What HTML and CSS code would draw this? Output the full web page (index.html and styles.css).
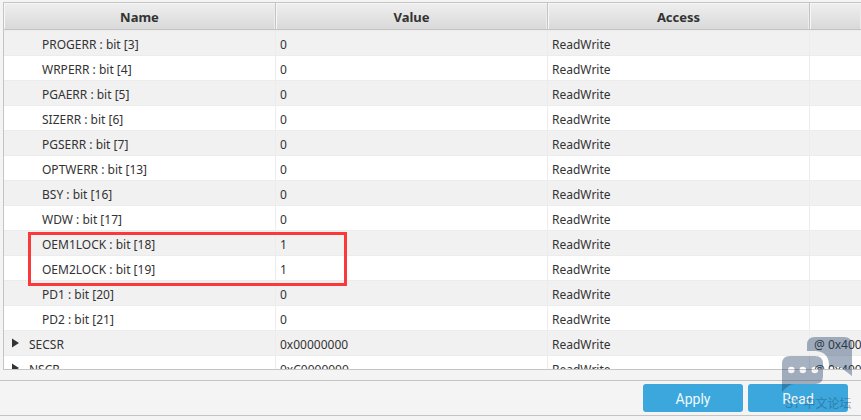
FILE: index.html
```html
<!DOCTYPE html>
<html lang="en">
<head>
    <meta charset="UTF-8">
    <meta name="viewport" content="width=device-width, initial-scale=1.0">
    <title>Option Bytes Registers</title>
    <link rel="stylesheet" href="styles.css">
</head>
<body>
    <main class="panel">
        <table class="registers">
            <colgroup>
                <col class="col-name">
                <col class="col-value">
                <col class="col-access">
                <col>
            </colgroup>
            <thead>
                <tr><th>Name</th><th>Value</th><th>Access</th><th></th></tr>
            </thead>
            <tbody>
                <tr><td class="bit">PROGERR : bit [3]</td><td>0</td><td>ReadWrite</td><td></td></tr>
                <tr><td class="bit">WRPERR : bit [4]</td><td>0</td><td>ReadWrite</td><td></td></tr>
                <tr><td class="bit">PGAERR : bit [5]</td><td>0</td><td>ReadWrite</td><td></td></tr>
                <tr><td class="bit">SIZERR : bit [6]</td><td>0</td><td>ReadWrite</td><td></td></tr>
                <tr><td class="bit">PGSERR : bit [7]</td><td>0</td><td>ReadWrite</td><td></td></tr>
                <tr><td class="bit">OPTWERR : bit [13]</td><td>0</td><td>ReadWrite</td><td></td></tr>
                <tr><td class="bit">BSY : bit [16]</td><td>0</td><td>ReadWrite</td><td></td></tr>
                <tr><td class="bit">WDW : bit [17]</td><td>0</td><td>ReadWrite</td><td></td></tr>
                <tr><td class="bit">OEM1LOCK : bit [18]</td><td>1</td><td>ReadWrite</td><td></td></tr>
                <tr><td class="bit">OEM2LOCK : bit [19]</td><td>1</td><td>ReadWrite</td><td></td></tr>
                <tr><td class="bit">PD1 : bit [20]</td><td>0</td><td>ReadWrite</td><td></td></tr>
                <tr><td class="bit">PD2 : bit [21]</td><td>0</td><td>ReadWrite</td><td></td></tr>
                <tr>
                    <td class="register"><svg class="arrow" width="7" height="10" viewBox="0 0 7 10"><path d="M0 0.5L7 5L0 9.5Z"/></svg>SECSR</td>
                    <td>0x00000000</td><td>ReadWrite</td><td>@ 0x40022024</td>
                </tr>
                <tr>
                    <td class="register"><svg class="arrow" width="7" height="10" viewBox="0 0 7 10"><path d="M0 0.5L7 5L0 9.5Z"/></svg>NSCR</td>
                    <td>0xC0000000</td><td>ReadWrite</td><td>@ 0x40022028</td>
                </tr>
            </tbody>
        </table>
        <div class="highlight"></div>
    </main>

    <footer class="actions">
        <button type="button">Apply</button>
        <button type="button">Read</button>
    </footer>

    <div class="watermark">
        <svg width="72" height="56" viewBox="0 0 72 56">
            <path d="M26 15V9Q26 1 34 1H63Q71 1 71 9V40L59 31H48V28Q47 16 35 15Z"/>
            <path fill-rule="evenodd" d="M9 20H34Q42 20 42 28V40Q42 48 34 48H13Q8 48 1 56V28Q1 20 9 20ZM7 34a3.3 3.3 0 1 0 6.6 0a3.3 3.3 0 1 0 -6.6 0ZM18.500 34a3.3 3.3 0 1 0 6.6 0a3.3 3.3 0 1 0 -6.6 0ZM30.500 34a3.3 3.3 0 1 0 6.6 0a3.3 3.3 0 1 0 -6.6 0Z"/>
        </svg>
        <span lang="zh">ST 中文论坛</span>
    </div>
</body>
</html>
```

FILE: styles.css
```css
* {
    box-sizing: border-box;
}

body {
    font-family: "Noto Sans", "Noto Sans CJK SC", sans-serif;
    font-size: 12px;
    color: #333;
    background-color: #f4f4f4;
    margin: 0;
    height: 100vh;
    overflow: hidden;
    position: relative;
    display: flex;
    flex-direction: column;
}

.panel {
    position: relative;
    flex: 1;
    min-height: 0;
    margin: 2px 0 10px 3px;
    border: 1px solid #c4c4c4;
    border-right: none;
    background-color: #fff;
    overflow: hidden;
}

.registers {
    width: 100%;
    table-layout: fixed;
    border-collapse: separate;
    border-spacing: 0;
}

.col-name,
.col-value {
    width: 272px;
}

.col-access {
    width: 262px;
}

th {
    height: 27px;
    padding: 2px 0 0;
    font-size: 13px;
    line-height: 18px;
    font-weight: bold;
    background: linear-gradient(#efefef, #d9d9d9);
    border-right: 1px solid #c4c4c4;
    border-bottom: 1px solid #c4c4c4;
    box-shadow: inset 1px 1px 0 #f7f7f7, inset -1px 0 0 #ececec;
}

td {
    height: 25px;
    padding: 4px 0 0 4px;
    line-height: 18px;
    white-space: nowrap;
    overflow: hidden;
    border-right: 1px solid #ececec;
    border-bottom: 1px solid #ececec;
}

th:last-child,
td:last-child {
    border-right: none;
}

tbody tr:nth-child(odd) {
    background-color: #f1f1f1;
}

tbody tr:first-child td {
    height: 26px;
    border-top: 1px solid #ececec;
}

.bit {
    padding-left: 38px;
}

.register {
    padding-left: 8px;
}

.arrow {
    margin-right: 10px;
    vertical-align: 1px;
    fill: #333;
}

.highlight {
    position: absolute;
    left: 24px;
    top: 229px;
    width: 319px;
    height: 54px;
    border: 3px solid #fa3a3a;
}

.actions {
    display: flex;
    justify-content: flex-end;
    gap: 5px;
    height: 36px;
    margin-bottom: 4px;
    padding: 3px 13px 3px 0;
    border-top: 1px solid #c4c4c4;
    border-bottom: 1px solid #c4c4c4;
}

button {
    width: 100px;
    padding: 1px 0 0;
    font-family: Roboto, sans-serif;
    font-size: 14px;
    color: #f0f8fc;
    background-color: #3ba7dc;
    border: none;
    border-radius: 3px;
    cursor: pointer;
}

button:hover {
    background-color: #2b95c9;
}

.watermark {
    position: absolute;
    right: 8px;
    bottom: 4px;
    display: flex;
    flex-direction: column;
    font-family: "Liberation Sans", "Noto Sans CJK SC", sans-serif;
    font-size: 12px;
    line-height: 24px;
    color: #244268;
    opacity: 0.4;
    pointer-events: none;
}

.watermark svg {
    fill: #244268;
}

.watermark span {
    padding-left: 4px;
    white-space: nowrap;
}
```
